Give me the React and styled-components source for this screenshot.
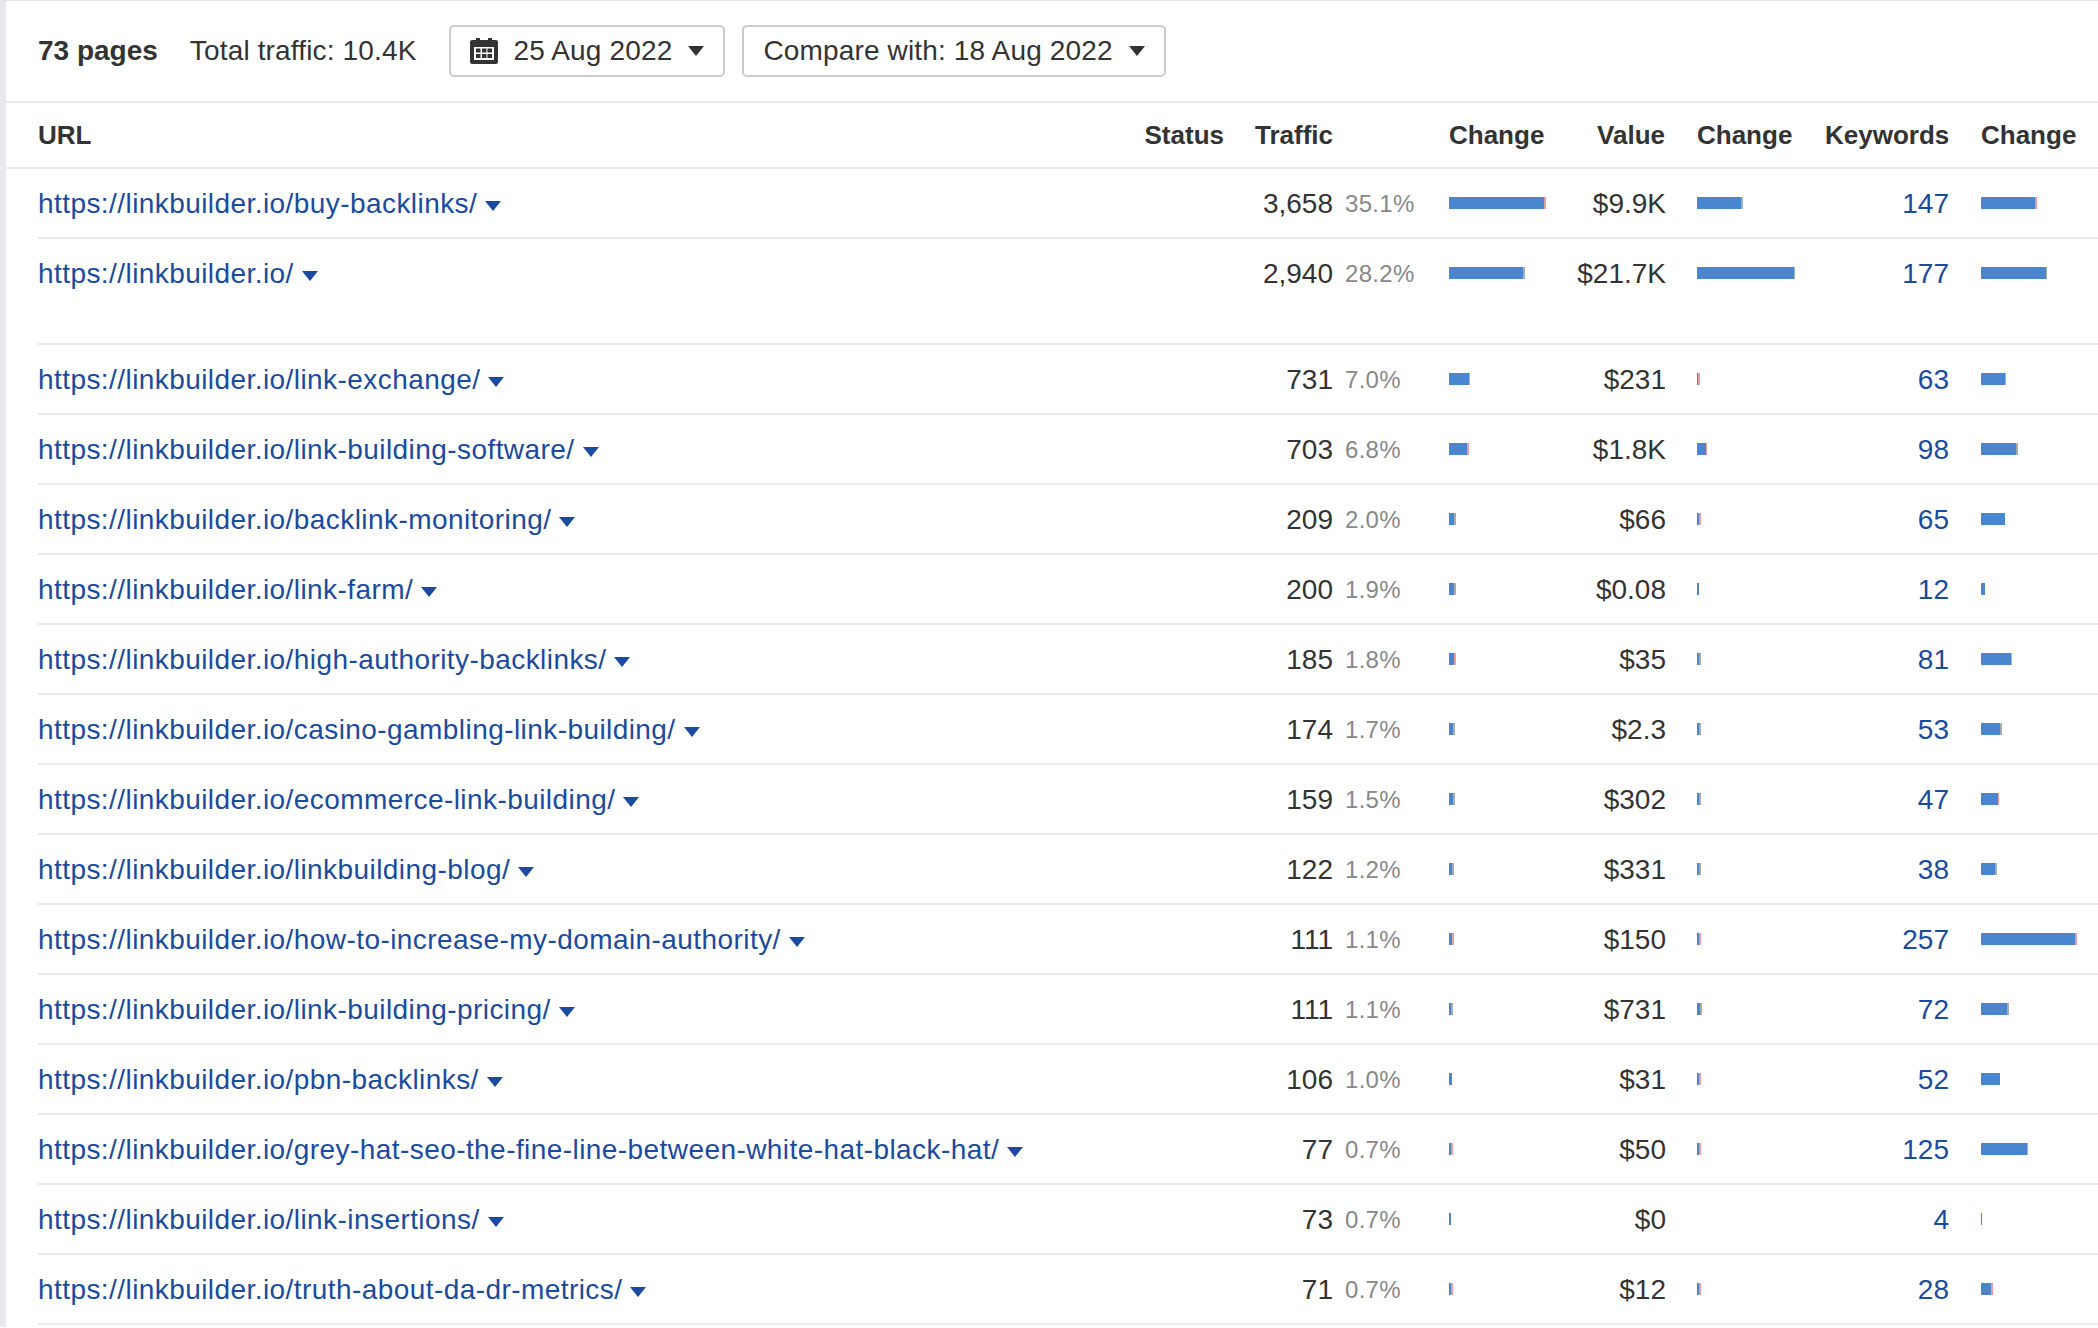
import React from 'react';
import styled, { createGlobalStyle } from 'styled-components';

const Global = createGlobalStyle`
  html, body { margin: 0; padding: 0; background: #fff; }
  body { font-family: "Liberation Sans", Arial, sans-serif; color: #333; }
`;

const GRID = '1106px 80px 109px 116px 120px 96px 160px 123px 150px';

const Page = styled.div`
  border-top: 1px solid #e6e6ea;
  border-left: 6px solid #e9e9ec;
  height: 1327px;
  box-sizing: border-box;
  overflow: hidden;
`;
const Toolbar = styled.div`
  display: flex;
  align-items: center;
  height: 100px;
  padding-left: 32px;
  border-bottom: 2px solid #ececec;
  font-size: 28px;
`;
const PageCount = styled.strong`
  font-weight: 700;
  margin-right: 32px;
`;
const Total = styled.span`
  margin-right: 33px;
  letter-spacing: 0.15px;
`;
const DropButton = styled.button`
  display: flex;
  align-items: center;
  height: 52px;
  box-sizing: border-box;
  padding: 0 19px;
  margin-right: 17px;
  border: 2px solid #ccc;
  border-radius: 5px;
  background: #fff;
  color: #333;
  font: inherit;
  letter-spacing: 0.15px;
`;
const CalendarIcon = styled.svg`
  width: 28px;
  height: 26px;
  margin-right: 15px;
  flex: none;
`;
const ButtonCaret = styled.span`
  width: 0;
  height: 0;
  margin-left: 16px;
  border-left: 8px solid transparent;
  border-right: 8px solid transparent;
  border-top: 10px solid #333;
`;
const HeadRow = styled.div`
  display: grid;
  grid-template-columns: ${GRID};
  height: 64px;
  padding-left: 32px;
  border-bottom: 2px solid #ececec;
  align-items: center;
  font-size: 26px;
  font-weight: 700;
`;
const HeadCell = styled.div`
  text-align: ${p => (p.$right ? 'right' : 'left')};
  padding-left: ${p => p.$inset || 0}px;
  white-space: nowrap;
`;
const Row = styled.div`
  display: grid;
  grid-template-columns: ${GRID};
  margin-left: 32px;
  padding-bottom: ${p => (p.$tall ? 36 : 0)}px;
  border-bottom: 2px solid #ececec;
  font-size: 28px;
`;
const Cell = styled.div`
  display: flex;
  align-items: center;
  height: 68px;
  padding-top: 2px;
  justify-content: ${p => (p.$right ? 'flex-end' : 'flex-start')};
  padding-left: ${p => p.$inset || 0}px;
  white-space: nowrap;
  box-sizing: border-box;
`;
const UrlLink = styled.a`
  color: #1a4b9e;
  text-decoration: none;
  letter-spacing: 0.43px;
`;
const UrlCaret = styled.span`
  width: 0;
  height: 0;
  margin-left: 8px;
  margin-top: 3px;
  border-left: 8px solid transparent;
  border-right: 8px solid transparent;
  border-top: 10px solid #1a4b9e;
`;
const Percent = styled.span`
  font-size: 24px;
  color: #888;
  letter-spacing: 0.3px;
`;
const Money = styled.span`
  margin-right: -1px;
`;
const KeywordLink = styled.a`
  color: #1a4b9e;
  text-decoration: none;
  margin-right: -1px;
`;
const Bar = styled.div`
  display: flex;
  height: 12px;
  margin-top: -2px;
`;
const Fill = styled.div`
  background: #4a86d0;
  height: 100%;
`;
const Delta = styled.div`
  height: 100%;
  background: ${p => (p.$tone === 'p' ? '#ec9a9c' : '#a3aea8')};
`;

const rows = [
  ['buy-backlinks/', '3,658', '35.1%', [95.3, 1.8, 'p'], '$9.9K', [44, 2.2, 'g'], '147', [53.9, 2.2, 'p']],
  ['', '2,940', '28.2%', [73.9, 2.2, 'g'], '$21.7K', [97, 1, 'g'], '177', [64.6, 0.6, 'g']],
  ['link-exchange/', '731', '7.0%', [19.6, 1.3, 'p'], '$231', [1.3, 1.8, 'p'], '63', [23.6, 1.3, 'p']],
  ['link-building-software/', '703', '6.8%', [18.3, 1.8, 'p'], '$1.8K', [8.5, 1.8, 'p'], '98', [35.2, 1.8, 'g']],
  ['backlink-monitoring/', '209', '2.0%', [4.9, 2.2, 'g'], '$66', [1.8, 2.2, 'p'], '65', [24, 0, 'g']],
  ['link-farm/', '200', '1.9%', [4.9, 2.2, 'g'], '$0.08', [2.2, 0, 'g'], '12', [4, 0, 'g']],
  ['high-authority-backlinks/', '185', '1.8%', [4.9, 2.2, 'p'], '$35', [1.8, 2.2, 'g'], '81', [29.8, 1.3, 'p']],
  ['casino-gambling-link-building/', '174', '1.7%', [4, 2.2, 'g'], '$2.3', [1.8, 2.2, 'g'], '53', [19, 1.8, 'g']],
  ['ecommerce-link-building/', '159', '1.5%', [4, 2.2, 'g'], '$302', [1.8, 2.2, 'g'], '47', [17.4, 1, 'p']],
  ['linkbuilding-blog/', '122', '1.2%', [3.1, 1.8, 'g'], '$331', [1.8, 2.2, 'g'], '38', [13.8, 2.2, 'g']],
  ['how-to-increase-my-domain-authority/', '111', '1.1%', [2.7, 2.2, 'p'], '$150', [1.8, 2.2, 'p'], '257', [94, 2.2, 'p']],
  ['link-building-pricing/', '111', '1.1%', [1.8, 2.7, 'g'], '$731', [2.7, 2.2, 'g'], '72', [26.3, 1.8, 'g']],
  ['pbn-backlinks/', '106', '1.0%', [3.1, 0, 'g'], '$31', [1.8, 2.2, 'p'], '52', [19.1, 0, 'g']],
  ['grey-hat-seo-the-fine-line-between-white-hat-black-hat/', '77', '0.7%', [1.8, 2.7, 'p'], '$50', [1.8, 2.2, 'p'], '125', [46.3, 1, 'g']],
  ['link-insertions/', '73', '0.7%', [2.2, 0, 'g'], '$0', null, '4', [1, 0, 'g']],
  ['truth-about-da-dr-metrics/', '71', '0.7%', [1.8, 2.7, 'p'], '$12', [1.8, 2.2, 'p'], '28', [10.2, 1.8, 'p']],
];

function ChangeBar({ data }) {
  if (!data) return null;
  const [fill, delta, tone] = data;
  return (
    <Bar>
      <Fill style={{ width: fill }} />
      {delta > 0 && <Delta $tone={tone} style={{ width: delta }} />}
    </Bar>
  );
}

function Calendar() {
  return (
    <CalendarIcon viewBox="0 0 28 26" aria-hidden="true">
      <path fill="#333" d="M6 0h4v2h8V0h4v2h4a2 2 0 0 1 2 2v20a2 2 0 0 1-2 2H2a2 2 0 0 1-2-2V4a2 2 0 0 1 2-2h4z" />
      <rect x="4" y="9" width="20" height="13" fill="#fff" />
      {[6, 12, 17.5].map(x => [10.5, 16].map(y => (
        <rect key={`${x}-${y}`} x={x} y={y} width="4.5" height="4" fill="#333" />
      )))}
    </CalendarIcon>
  );
}

export default function App() {
  return (
    <Page>
      <Global />
      <Toolbar>
        <PageCount>73 pages</PageCount>
        <Total>Total traffic: 10.4K</Total>
        <DropButton>
          <Calendar />
          25 Aug 2022
          <ButtonCaret />
        </DropButton>
        <DropButton>
          Compare with: 18 Aug 2022
          <ButtonCaret />
        </DropButton>
      </Toolbar>
      <HeadRow>
        <HeadCell>URL</HeadCell>
        <HeadCell $right>Status</HeadCell>
        <HeadCell $right>Traffic</HeadCell>
        <HeadCell />
        <HeadCell>Change</HeadCell>
        <HeadCell $right>Value</HeadCell>
        <HeadCell $inset={32}>Change</HeadCell>
        <HeadCell $right>Keywords</HeadCell>
        <HeadCell $inset={33}>Change</HeadCell>
      </HeadRow>
      {rows.map((r, i) => (
        <Row key={i} $tall={i === 1}>
          <Cell>
            <UrlLink href="#">https://linkbuilder.io/{r[0]}</UrlLink>
            <UrlCaret />
          </Cell>
          <Cell />
          <Cell $right>{r[1]}</Cell>
          <Cell $inset={12}><Percent>{r[2]}</Percent></Cell>
          <Cell><ChangeBar data={r[3]} /></Cell>
          <Cell $right><Money>{r[4]}</Money></Cell>
          <Cell $inset={32}><ChangeBar data={r[5]} /></Cell>
          <Cell $right><KeywordLink href="#">{r[6]}</KeywordLink></Cell>
          <Cell $inset={33}><ChangeBar data={r[7]} /></Cell>
        </Row>
      ))}
    </Page>
  );
}
